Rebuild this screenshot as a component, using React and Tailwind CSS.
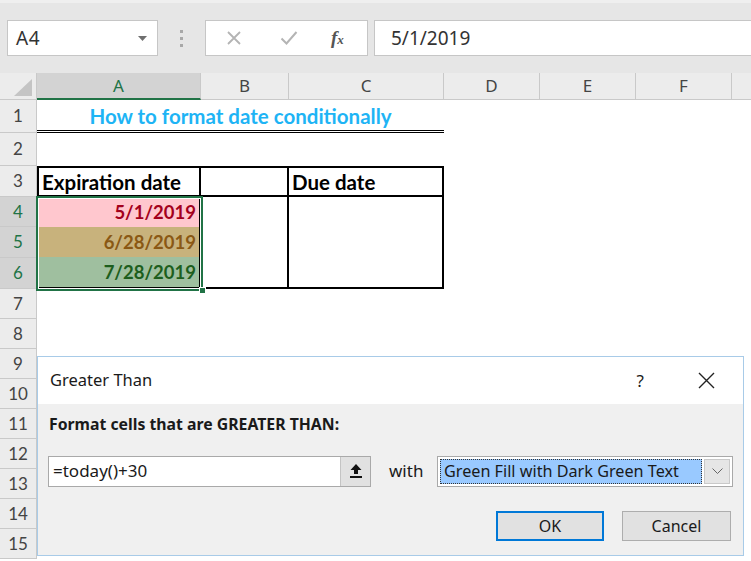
import React from 'react';

const cols = [
  { k: 'A', w: 164 },
  { k: 'B', w: 88 },
  { k: 'C', w: 155 },
  { k: 'D', w: 96 },
  { k: 'E', w: 96 },
  { k: 'F', w: 96 },
];

const heights = [33, 33, 31, 30, 31, 31, 30, 30, 30, 30, 30, 30, 30, 30, 30];

const RowHead = ({ n, selected }) => (
  <div
    className={`w-[37px] shrink-0 flex items-center justify-center border-r border-b border-[#c9c9c9] text-[17px] ${
      selected ? 'bg-[#d3d3d3] text-[#217346]' : 'bg-[#ececec] text-[#444]'
    }`}
  >
    {n}
  </div>
);

const Toolbar = () => (
  <div className="h-[73px] bg-[#e6e6e6] border-t-[3px] border-[#efefef] flex items-start pt-[17px] pl-[7px] font-['Noto_Sans',sans-serif]">
    <div className="w-[151px] h-[36px] bg-white border border-[#c6c6c6] flex items-center pl-[8px] pr-[10px]">
      <span className="text-[19px] tracking-[0.5px] text-[#333]">A4</span>
      <svg className="ml-auto" width="9" height="5" viewBox="0 0 9 5">
        <path d="M0 0h9L4.5 5z" fill="#6f6f6f" />
      </svg>
    </div>
    <div className="w-[47px] h-[36px] flex flex-col items-center justify-center gap-[4px]">
      <span className="w-[3px] h-[3px] bg-[#a8a8a8]" />
      <span className="w-[3px] h-[3px] bg-[#a8a8a8]" />
      <span className="w-[3px] h-[3px] bg-[#a8a8a8]" />
    </div>
    <div className="w-[163px] h-[36px] bg-white border border-[#c6c6c6] flex items-center">
      <svg className="ml-[20px]" width="16" height="16" viewBox="0 0 16 16">
        <path d="M2 2l12 12M14 2L2 14" stroke="#b4b4b4" strokeWidth="1.8" />
      </svg>
      <svg className="ml-[38px]" width="18" height="16" viewBox="0 0 18 16">
        <path d="M1.5 8.5l5 5L16.5 2" stroke="#b4b4b4" strokeWidth="2" fill="none" />
      </svg>
      <span className="ml-[33px] font-['Liberation_Serif',serif] italic font-bold text-[19px] text-[#555]">
        f<span className="text-[13px]">x</span>
      </span>
    </div>
    <div className="ml-[6px] flex-1 h-[36px] bg-white border-y border-l border-[#c6c6c6] flex items-center pl-[16px]">
      <span className="text-[19px] text-[#333]">5/1/2019</span>
    </div>
  </div>
);

const ColHeads = () => (
  <div className="h-[27px] flex bg-[#ececec] text-[17px] text-[#444]">
    <div className="w-[37px] shrink-0 border-r border-b border-[#c9c9c9] relative">
      <svg className="absolute right-[4px] bottom-[3px]" width="18" height="17" viewBox="0 0 18 17">
        <path d="M18 0V17H0z" fill="#c4c4c4" />
      </svg>
    </div>
    {cols.map((c) => (
      <div
        key={c.k}
        style={{ width: c.w }}
        className={`shrink-0 flex items-center justify-center border-r border-[#c9c9c9] ${
          c.k === 'A' ? 'bg-[#d3d3d3] text-[#217346] border-b-2 border-b-[#217346]' : 'border-b border-b-[#c9c9c9]'
        }`}
      >
        {c.k}
      </div>
    ))}
    <div className="flex-1 border-b border-[#c9c9c9]" />
  </div>
);

const Sheet = () => (
  <div className="font-['Lato',sans-serif]">
    {/* row 1 */}
    <div className="flex" style={{ height: heights[0] }}>
      <RowHead n={1} />
      <div className="w-[407px] shrink-0 flex items-center justify-center border-b-[3px] border-double border-black pt-[2px]">
        <span className="text-[#1eb4f5] font-bold text-[20.5px]">How to format date conditionally</span>
      </div>
    </div>
    {/* row 2 */}
    <div className="flex" style={{ height: heights[1] }}>
      <RowHead n={2} />
    </div>
    {/* row 3 */}
    <div className="flex" style={{ height: heights[2] }}>
      <RowHead n={3} />
      <div className="w-[164px] shrink-0 border-2 border-black flex items-center pl-[3px] pt-[1px] font-bold text-[20.5px] text-black">
        Expiration date
      </div>
      <div className="w-[88px] shrink-0 border-y-2 border-r-2 border-black" />
      <div className="w-[155px] shrink-0 border-y-2 border-r-2 border-black flex items-center pl-[3px] pt-[1px] font-bold text-[20.5px] text-black">
        Due date
      </div>
    </div>
    {/* rows 4-6 */}
    <div className="flex">
      <div className="flex flex-col">
        {[4, 5, 6].map((n, i) => (
          <div key={n} className="flex" style={{ height: heights[3 + i] }}>
            <RowHead n={n} selected />
          </div>
        ))}
      </div>
      <div className="w-[164px] shrink-0 border-l-2 border-b-2 border-r-2 border-black flex flex-col font-bold text-[18.5px]">
        <div className="flex-1 bg-[#ffc7ce] text-[#a3001c] flex items-center justify-end pr-[3px] pt-[2px]">5/1/2019</div>
        <div className="flex-1 bg-[#c8b27c] text-[#8a5814] flex items-center justify-end pr-[3px] pt-[2px]">6/28/2019</div>
        <div className="flex-1 bg-[#9fbf9f] text-[#1d5e1d] flex items-center justify-end pr-[3px] pt-[2px]">7/28/2019</div>
      </div>
      <div className="w-[88px] shrink-0 border-b-2 border-r-2 border-black" />
      <div className="w-[155px] shrink-0 border-b-2 border-r-2 border-black" />
    </div>
    {heights.slice(6).map((h, i) => (
      <div key={i} className="flex" style={{ height: h }}>
        <RowHead n={7 + i} />
      </div>
    ))}
  </div>
);

const Dialog = () => (
  <div className="absolute left-[37px] top-[356px] w-[707px] h-[200px] border border-[#a8cbe8] flex flex-col font-['Noto_Sans',sans-serif] text-[#1a1a1a]">
    <div className="h-[47px] bg-white flex items-center pl-[12px]">
      <span className="text-[16.5px]">Greater Than</span>
      <span className="ml-auto text-[17px] mr-[54px]">?</span>
      <svg className="mr-[28px]" width="17" height="17" viewBox="0 0 17 17">
        <path d="M1 1l15 15M16 1L1 16" stroke="#222" strokeWidth="1.4" />
      </svg>
    </div>
    <div className="flex-1 bg-[#f0f0f0] pl-[10px] pr-[10px]">
      <div className="pt-[9px] pl-[1px] text-[15.8px] font-bold">Format cells that are GREATER THAN:</div>
      <div className="mt-[19px] flex items-center h-[31px]">
        <div className="w-[323px] h-full flex border border-[#a9a9a9] bg-white">
          <div className="flex-1 flex items-center pl-[4px] text-[17px]">=today()+30</div>
          <div className="w-[30px] bg-[#e1e1e1] border-l border-[#c4c4c4] flex items-center justify-center">
            <svg width="12" height="14" viewBox="0 0 12 14">
              <path d="M6 0L11.5 6H8V10H4V6H0.5z" fill="#111" />
              <rect x="0" y="12" width="12" height="2" fill="#111" />
            </svg>
          </div>
        </div>
        <span className="ml-[18px] text-[17px]">with</span>
        <div className="ml-auto w-[296px] h-full flex border border-[#a9a9a9] bg-white p-[2px] gap-[2px]">
          <div className="flex-1 bg-[#99c9ff] border border-dotted border-[#333] flex items-center pl-[3px] text-[16.2px]">
            Green Fill with Dark Green Text
          </div>
          <div className="w-[26px] bg-[#e6e6e6] border border-[#c9c9c9] flex items-center justify-center">
            <svg width="11" height="6" viewBox="0 0 11 6">
              <path d="M0.5 0.5L5.5 5.5L10.5 0.5" stroke="#666" strokeWidth="1" fill="none" />
            </svg>
          </div>
        </div>
      </div>
      <div className="mt-[24px] flex justify-end gap-[18px] pr-[2px]">
        <button className="w-[108px] h-[30px] bg-[#e1e1e1] border-2 border-[#0078d7] text-[16px]">OK</button>
        <button className="w-[109px] h-[30px] bg-[#e1e1e1] border border-[#adadad] text-[16px]">Cancel</button>
      </div>
    </div>
  </div>
);

export default function App() {
  return (
    <div className="w-[751px] h-[561px] relative overflow-hidden bg-white">
      <Toolbar />
      <ColHeads />
      <Sheet />
      {/* selection around A4:A6 */}
      <div className="absolute left-[36px] top-[196px] w-[167px] h-[95px] border-2 border-[#217346]">
        <div className="w-full h-full border border-white" />
        <div className="absolute right-[-5px] bottom-[-5px] w-[7px] h-[7px] bg-[#217346] border border-white" />
      </div>
      <Dialog />
    </div>
  );
}
